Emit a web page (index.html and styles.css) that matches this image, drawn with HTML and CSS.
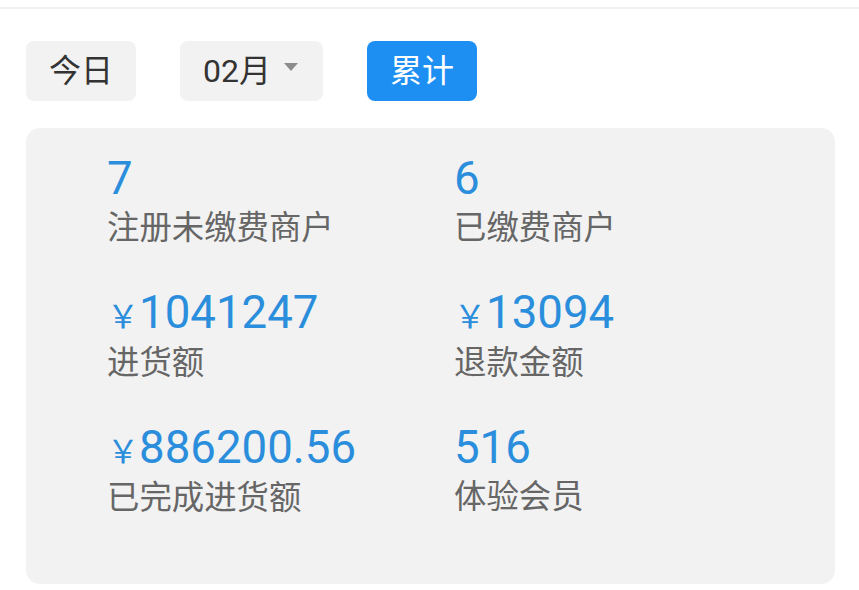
FILE: index.html
```html
<!DOCTYPE html>
<html lang="zh-CN">
<head>
<meta charset="utf-8">
<title>统计</title>
<link rel="stylesheet" href="styles.css">
</head>
<body>
<div class="topline"></div>
<div class="tabs">
  <div class="tab">今日</div>
  <div class="tab month">02月<span class="caret"></span></div>
  <div class="tab active">累计</div>
</div>
<div class="panel">
  <div class="grid">
    <div class="stat"><div class="num">7</div><div class="label">注册未缴费商户</div></div>
    <div class="stat"><div class="num">6</div><div class="label">已缴费商户</div></div>
    <div class="stat"><div class="num"><span class="yen">￥</span>1041247</div><div class="label">进货额</div></div>
    <div class="stat"><div class="num"><span class="yen">￥</span>13094</div><div class="label">退款金额</div></div>
    <div class="stat"><div class="num"><span class="yen">￥</span>886200.56</div><div class="label">已完成进货额</div></div>
    <div class="stat"><div class="num">516</div><div class="label">体验会员</div></div>
  </div>
</div>
</body>
</html>
```

FILE: styles.css
```css
html, body {
  margin: 0;
  padding: 0;
  background: #ffffff;
}
body {
  font-family: Roboto, "Noto Sans CJK SC", sans-serif;
  width: 859px;
  height: 590px;
  overflow: hidden;
}
.topline {
  margin-top: 7px;
  height: 2px;
  background: #f0f0f0;
}
.tabs {
  display: flex;
  gap: 44px;
  margin: 32px 0 0 26px;
}
.tab {
  height: 60px;
  box-sizing: border-box;
  padding: 0 23px;
  border-radius: 8px;
  background: #f2f2f2;
  color: #333333;
  font-size: 32px;
  line-height: 60px;
  display: flex;
  align-items: center;
}
.tab.month {
  padding-right: 25px;
}
.caret {
  display: inline-block;
  width: 0;
  height: 0;
  border-left: 7px solid transparent;
  border-right: 7px solid transparent;
  border-top: 8px solid #8c8c8c;
  margin-left: 13px;
  margin-top: -8px;
}
.tab.active {
  background: #1e8ff2;
  color: #ffffff;
}
.panel {
  margin: 27px 0 0 26px;
  width: 809px;
  height: 456px;
  box-sizing: border-box;
  background: #f2f2f2;
  border-radius: 14px;
  padding: 25px 0 0 81px;
}
.grid {
  display: grid;
  grid-template-columns: 347px 1fr;
  row-gap: 42px;
}
.num {
  font-size: 45.6px;
  line-height: 52px;
  color: #2a8edc;
  white-space: nowrap;
}
.yen {
  font-family: "Noto Sans CJK SC", sans-serif;
  font-size: 32px;
}
.label {
  font-family: "Noto Sans CJK SC", sans-serif;
  font-size: 32.4px;
  line-height: 40px;
  color: #666666;
}
```
